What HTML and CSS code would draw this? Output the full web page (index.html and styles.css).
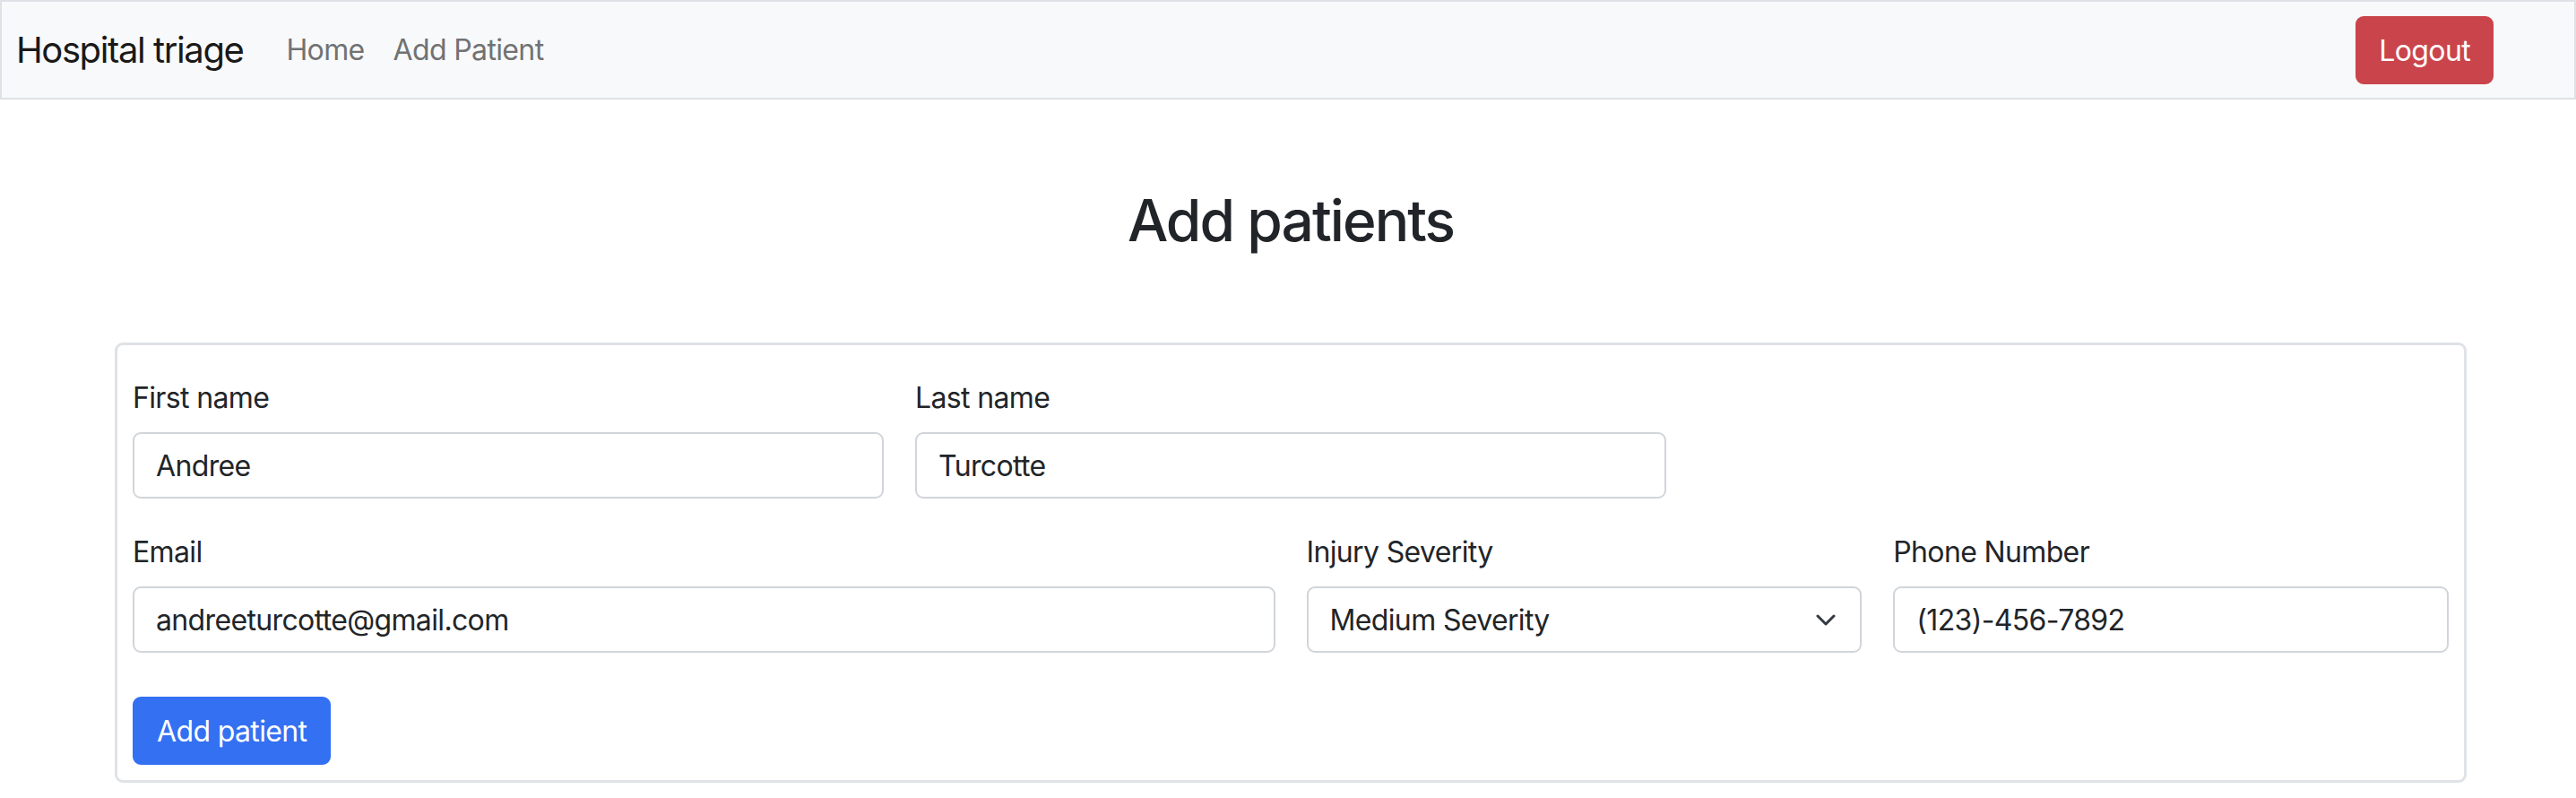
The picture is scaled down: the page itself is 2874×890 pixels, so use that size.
FILE: index.html
```
<!DOCTYPE html>
<html lang="en">
<head>
<meta charset="utf-8">
<title>Hospital triage</title>
<link rel="stylesheet" href="styles.css">
</head>
<body>
<nav class="navbar">
  <a class="brand" href="#">Hospital triage</a>
  <ul class="nav">
    <li><a class="nav-link" href="#">Home</a></li>
    <li><a class="nav-link" href="#">Add Patient</a></li>
  </ul>
  <button class="btn btn-danger" type="button">Logout</button>
</nav>
<main class="page">
  <h2 class="title">Add patients</h2>
  <form class="card">
    <div class="grid">
      <div class="field span4">
        <label class="label" for="fn">First name</label>
        <input class="control" id="fn" type="text" value="Andree">
      </div>
      <div class="field span4">
        <label class="label" for="ln">Last name</label>
        <input class="control" id="ln" type="text" value="Turcotte">
      </div>
      <div class="field span6 row2">
        <label class="label" for="em">Email</label>
        <input class="control" id="em" type="email" value="andreeturcotte@gmail.com">
      </div>
      <div class="field span3">
        <label class="label" for="sv">Injury Severity</label>
        <div class="select-wrap">
          <select class="control select" id="sv">
            <option>Low Severity</option>
            <option selected>Medium Severity</option>
            <option>High Severity</option>
          </select>
          <svg class="chevron" width="22" height="13" viewBox="0 0 22 13" aria-hidden="true"><path d="M2 2 L11 11 L20 2" fill="none" stroke="#343a40" stroke-width="3" stroke-linecap="round" stroke-linejoin="round"/></svg>
        </div>
      </div>
      <div class="field span3">
        <label class="label" for="ph">Phone Number</label>
        <input class="control" id="ph" type="tel" value="(123)-456-7892">
      </div>
    </div>
    <button class="btn btn-primary" type="submit">Add patient</button>
  </form>
</main>
</body>
</html>
```
FILE: styles.css
```
* { box-sizing: border-box; }

html, body {
  margin: 0;
  padding: 0;
  background: #ffffff;
}

body {
  font-family: Inter, "Noto Sans", "Liberation Sans", sans-serif;
  font-size: 32px;
  line-height: 1.5;
  letter-spacing: -0.02em;
  color: #212529;
}

.navbar {
  display: flex;
  align-items: center;
  height: 111px;
  padding: 0 90px 0 16px;
  background: #f8f9fa;
  border: 2px solid #dee2e6;
}

.brand {
  font-size: 40px;
  line-height: 60px;
  letter-spacing: -0.035em;
  padding: 10px 0;
  margin-right: 32px;
  color: #191919;
  text-decoration: none;
  white-space: nowrap;
}

.nav {
  display: flex;
  list-style: none;
  margin: 0;
  padding: 0;
  flex: 1;
}

.nav-link {
  display: block;
  padding: 16px 16px;
  color: #717273;
  text-decoration: none;
  font-size: 32px;
  line-height: 48px;
}

.btn {
  font-family: inherit;
  font-size: 32px;
  line-height: 48px;
  letter-spacing: -0.02em;
  padding: 13px 25px 11px;
  border: 2px solid transparent;
  border-radius: 9px;
  color: #ffffff;
  cursor: pointer;
}

.btn-danger {
  background: #ca444b;
  border-color: #ca444b;
  padding-left: 24px;
  padding-right: 24px;
}

.btn-primary {
  background: #3470f2;
  border-color: #3470f2;
  margin-top: 49px;
}

.page {
  padding: 0 122px 0 128px;
}

.title {
  margin: 97px 0;
  text-align: center;
  font-size: 64px;
  font-weight: 500;
  line-height: 1.2;
  letter-spacing: -0.03em;
  color: #212529;
}

.card {
  border: 3px solid #dfe2e6;
  border-radius: 9px;
  padding: 33px 17px 17px;
  background: #ffffff;
}

.grid {
  display: grid;
  grid-template-columns: repeat(12, 1fr);
  column-gap: 35px;
  row-gap: 34px;
}

.span4 { grid-column: span 4; }
.span6 { grid-column: span 6; }
.span3 { grid-column: span 3; }
.row2 { grid-column: 1 / span 6; }

.field {
  display: flex;
  flex-direction: column;
  min-width: 0;
}

.label {
  display: block;
  padding-top: 2px;
  margin-bottom: 14px;
  line-height: 48px;
  color: #212529;
}

.control {
  display: block;
  width: 100%;
  font-family: inherit;
  font-size: 32px;
  line-height: 48px;
  letter-spacing: -0.02em;
  padding: 12px 24px 10px;
  color: #212529;
  background: #ffffff;
  border: 2px solid #d1d5da;
  border-radius: 9px;
  outline: none;
}

.select-wrap {
  position: relative;
}

.select {
  appearance: none;
  -webkit-appearance: none;
  padding-right: 72px;
  height: 74px;
}

.chevron {
  position: absolute;
  right: 29px;
  top: 50%;
  margin-top: -6px;
  pointer-events: none;
}
```
